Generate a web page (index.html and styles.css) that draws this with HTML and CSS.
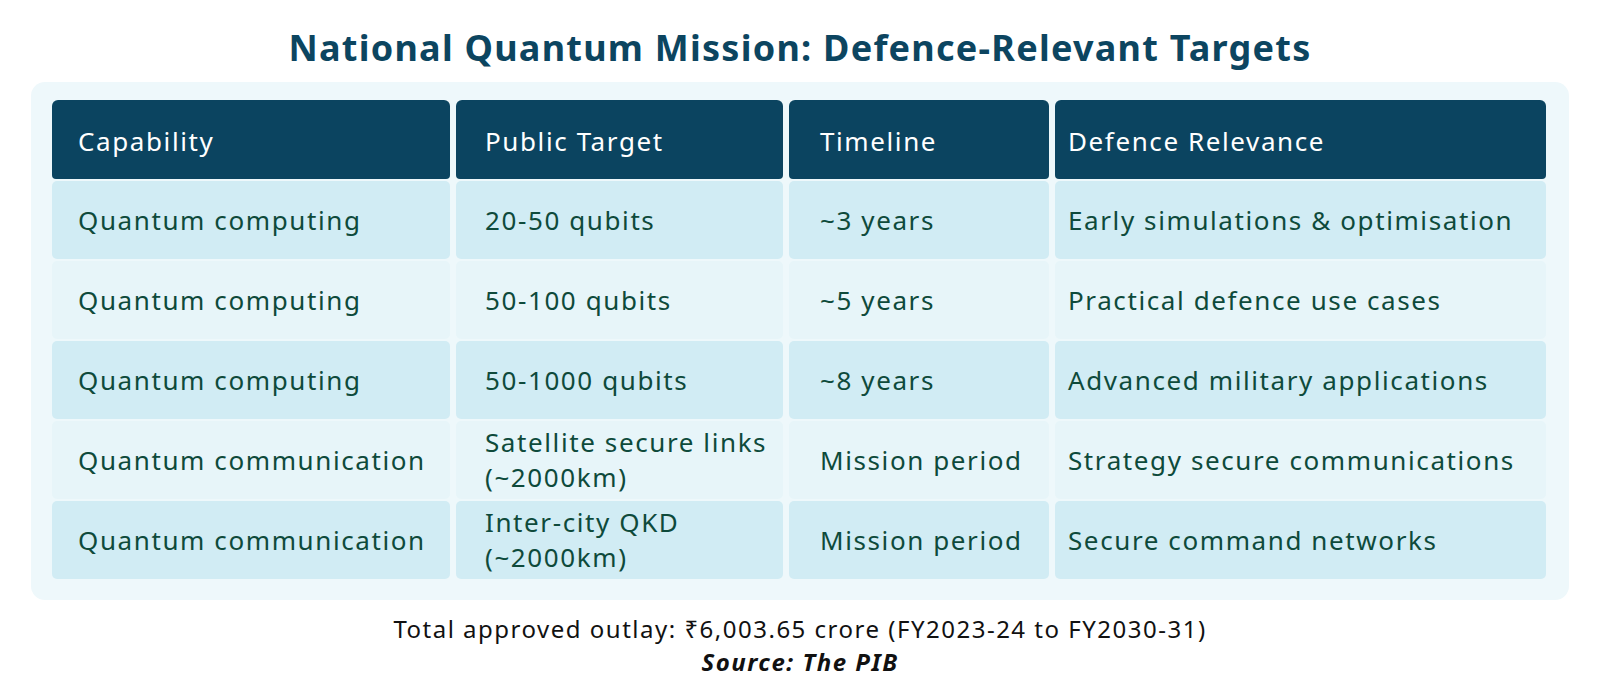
FILE: index.html
```html
<!DOCTYPE html>
<html lang="en">
<head>
<meta charset="utf-8">
<title>National Quantum Mission: Defence-Relevant Targets</title>
<link rel="stylesheet" href="styles.css">
</head>
<body>
<main class="page">
  <h1 class="title">National Quantum Mission: Defence-Relevant Targets</h1>
  <section class="panel">
    <div class="grid">
      <div class="cell head c1">Capability</div>
      <div class="cell head c2">Public Target</div>
      <div class="cell head c3">Timeline</div>
      <div class="cell head c4">Defence Relevance</div>

      <div class="cell odd c1">Quantum computing</div>
      <div class="cell odd c2">20-50 qubits</div>
      <div class="cell odd c3">~3 years</div>
      <div class="cell odd c4">Early simulations &amp; optimisation</div>

      <div class="cell even c1">Quantum computing</div>
      <div class="cell even c2">50-100 qubits</div>
      <div class="cell even c3">~5 years</div>
      <div class="cell even c4">Practical defence use cases</div>

      <div class="cell odd c1">Quantum computing</div>
      <div class="cell odd c2">50-1000 qubits</div>
      <div class="cell odd c3">~8 years</div>
      <div class="cell odd c4">Advanced military applications</div>

      <div class="cell even c1">Quantum communication</div>
      <div class="cell even c2">Satellite secure links<br>(~2000km)</div>
      <div class="cell even c3">Mission period</div>
      <div class="cell even c4">Strategy secure communications</div>

      <div class="cell odd c1">Quantum communication</div>
      <div class="cell odd c2">Inter-city QKD<br>(~2000km)</div>
      <div class="cell odd c3">Mission period</div>
      <div class="cell odd c4">Secure command networks</div>
    </div>
  </section>
  <footer class="notes">
    <p class="outlay">Total approved outlay: ₹6,003.65 crore (FY2023-24 to FY2030-31)</p>
    <p class="source">Source: The PIB</p>
  </footer>
</main>
</body>
</html>
```

FILE: styles.css
```css
html, body {
  margin: 0;
  padding: 0;
  background: #ffffff;
}

body {
  font-family: "Noto Sans", "DejaVu Sans", sans-serif;
  width: 1600px;
  height: 695px;
  overflow: hidden;
}

.page {
  display: flex;
  flex-direction: column;
  align-items: stretch;
}

.title {
  margin: 0 0 10px 0;
  padding-top: 24px;
  line-height: 48px;
  font-size: 36px;
  font-weight: 700;
  color: #0c4560;
  text-align: center;
  letter-spacing: 1.25px;
}

.panel {
  margin: 0 31px;
  padding: 18px 23px 21px 21px;
  background: #eef8fb;
  border-radius: 14px;
}

.grid {
  display: grid;
  grid-template-columns: 398px 327px 260px 491px;
  grid-template-rows: 79px repeat(5, 78px);
  column-gap: 6px;
  row-gap: 2px;
}

.cell {
  display: flex;
  flex-direction: column;
  justify-content: center;
  font-size: 26px;
  line-height: 35px;
  letter-spacing: 1.6px;
  color: #0e4a3b;
  border-radius: 5px;
}

.head {
  background: #0b4460;
  color: #ffffff;
  border-radius: 6px 6px 4px 4px;
  padding-top: 4px;
}

.odd {
  background: #d1ecf4;
}

.even {
  background: #e7f5f9;
}

.c1 { padding-left: 26px; }
.c2 { padding-left: 29px; }
.c3 { padding-left: 31px; }
.c4 { padding-left: 13px; }

.notes {
  margin-top: 12px;
  text-align: center;
  color: #111111;
}

.notes p {
  margin: 0;
  line-height: 33px;
  font-size: 24px;
  letter-spacing: 1.5px;
}

.source {
  font-style: italic;
  font-weight: 700;
}
```
